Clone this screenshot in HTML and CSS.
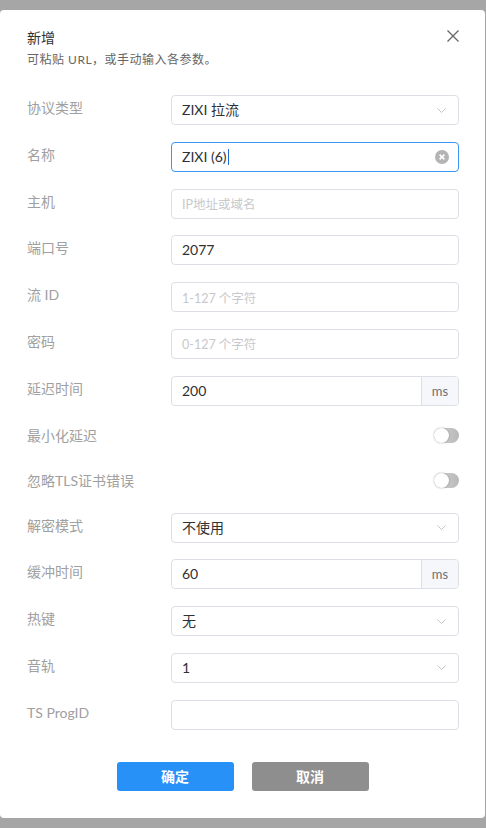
FILE: index.html
```html
<!DOCTYPE html>
<html lang="zh-CN">
<head>
<meta charset="utf-8">
<title>新增</title>
<link rel="stylesheet" href="styles.css">
</head>
<body>
<div class="dialog">
  <div class="header">
    <div class="title">新增</div>
    <div class="subtitle">可粘贴 URL，或手动输入各参数。</div>
    <button class="close" aria-label="关闭">
      <svg width="12" height="12" viewBox="0 0 12 12"><path d="M0.5 0.5 L11.5 11.5 M11.5 0.5 L0.5 11.5" stroke="#666" stroke-width="1.3" fill="none"/></svg>
    </button>
  </div>
  <div class="form">
    <div class="row">
      <div class="label">协议类型</div>
      <div class="control select"><span class="val">ZIXI 拉流</span><span class="chev"><svg width="9" height="5" viewBox="0 0 9 5"><path d="M0.5 0.5 L4.5 4.5 L8.5 0.5" stroke="#c0c4cc" stroke-width="1" fill="none"/></svg></span></div>
    </div>
    <div class="row">
      <div class="label">名称</div>
      <div class="control focused"><span class="val">ZIXI (6)</span><span class="caret"></span><span class="clear"><svg width="14" height="14" viewBox="0 0 14 14"><circle cx="7" cy="7" r="7" fill="#b4b4b4"/><path d="M4.6 4.6 L9.4 9.4 M9.4 4.6 L4.6 9.4" stroke="#fff" stroke-width="1.6"/></svg></span></div>
    </div>
    <div class="row">
      <div class="label">主机</div>
      <div class="control"><span class="ph">IP地址或域名</span></div>
    </div>
    <div class="row">
      <div class="label">端口号</div>
      <div class="control"><span class="val">2077</span></div>
    </div>
    <div class="row">
      <div class="label">流 ID</div>
      <div class="control"><span class="ph">1-127 个字符</span></div>
    </div>
    <div class="row">
      <div class="label">密码</div>
      <div class="control"><span class="ph">0-127 个字符</span></div>
    </div>
    <div class="row">
      <div class="label">延迟时间</div>
      <div class="control addon-wrap"><span class="val">200</span><span class="addon">ms</span></div>
    </div>
    <div class="row toggle-row">
      <div class="label">最小化延迟</div>
      <div class="switch-cell"><span class="switch"><span class="knob"></span></span></div>
    </div>
    <div class="row toggle-row">
      <div class="label">忽略TLS证书错误</div>
      <div class="switch-cell"><span class="switch"><span class="knob"></span></span></div>
    </div>
    <div class="row">
      <div class="label">解密模式</div>
      <div class="control select"><span class="val">不使用</span><span class="chev"><svg width="9" height="5" viewBox="0 0 9 5"><path d="M0.5 0.5 L4.5 4.5 L8.5 0.5" stroke="#c0c4cc" stroke-width="1" fill="none"/></svg></span></div>
    </div>
    <div class="row">
      <div class="label">缓冲时间</div>
      <div class="control addon-wrap"><span class="val">60</span><span class="addon">ms</span></div>
    </div>
    <div class="row">
      <div class="label">热键</div>
      <div class="control select"><span class="val">无</span><span class="chev"><svg width="9" height="5" viewBox="0 0 9 5"><path d="M0.5 0.5 L4.5 4.5 L8.5 0.5" stroke="#c0c4cc" stroke-width="1" fill="none"/></svg></span></div>
    </div>
    <div class="row">
      <div class="label">音轨</div>
      <div class="control select"><span class="val">1</span><span class="chev"><svg width="9" height="5" viewBox="0 0 9 5"><path d="M0.5 0.5 L4.5 4.5 L8.5 0.5" stroke="#c0c4cc" stroke-width="1" fill="none"/></svg></span></div>
    </div>
    <div class="row last">
      <div class="label">TS ProgID</div>
      <div class="control"></div>
    </div>
  </div>
  <div class="footer">
    <button class="btn primary">确定</button>
    <button class="btn cancel">取消</button>
  </div>
</div>
</body>
</html>
```
FILE: styles.css
```css
* { box-sizing: border-box; }
html, body { margin: 0; padding: 0; }
body {
  background: #a6a6a6;
  font-family: Lato, "Noto Sans CJK SC", sans-serif;
  width: 486px;
  height: 828px;
  padding-top: 10px;
  overflow: hidden;
}
.dialog {
  width: 485px;
  height: 808px;
  background: #fff;
  border-radius: 4px;
  padding: 18px 26px 0 27px;
}
.header {
  position: relative;
  height: 67px;
}
.title {
  font-size: 14px;
  line-height: 20px;
  color: #303133;
}
.subtitle {
  margin-top: 2px;
  font-size: 12px;
  line-height: 20px;
  color: #666;
  letter-spacing: 0.5px;
}
.close {
  position: absolute;
  right: -4px;
  top: 1px;
  width: 20px;
  height: 14px;
  padding: 0;
  border: 0;
  background: none;
  display: flex;
  align-items: center;
  justify-content: center;
}
.form {
  display: flex;
  flex-direction: column;
}
.row {
  display: grid;
  grid-template-columns: 144px 1fr;
  height: 30px;
  margin-bottom: 16.8px;
}
.row.toggle-row {
  height: 28px;
  margin-bottom: 17px;
}
.row.last { margin-bottom: 32px; }
.label {
  font-size: 14px;
  line-height: 26px;
  color: #a0a0a0;
  white-space: nowrap;
}
.control {
  position: relative;
  height: 30px;
  border: 1px solid #dcdfe6;
  border-radius: 4px;
  display: flex;
  align-items: center;
  padding-left: 10px;
  font-size: 14px;
  color: #303133;
  overflow: hidden;
}
.control.focused { border-color: #3a95f5; }
.val { line-height: 28px; }
.ph {
  font-size: 12.5px;
  color: #c8c9cc;
}
.caret {
  width: 1px;
  height: 16px;
  background: #1f6fd1;
  margin-left: 1px;
}
.clear {
  margin-left: auto;
  margin-right: 9px;
  display: flex;
}
.chev {
  margin-left: auto;
  margin-right: 12px;
  display: flex;
}
.addon-wrap { padding-right: 0; }
.addon {
  margin-left: auto;
  width: 37px;
  height: 100%;
  background: #f5f7fa;
  border-left: 1px solid #dcdfe6;
  color: #707070;
  font-size: 13px;
  display: flex;
  align-items: center;
  justify-content: center;
}
.switch-cell {
  display: flex;
  justify-content: flex-end;
  padding-top: 5px;
}
.switch {
  position: relative;
  width: 25px;
  height: 15px;
  border-radius: 8px;
  background: linear-gradient(to right, #d6d6d6, #b8b8b8);
}
.knob {
  position: absolute;
  left: 0;
  top: 0;
  width: 15px;
  height: 15px;
  border-radius: 50%;
  background: #fff;
  box-shadow: 0 0 2px rgba(0,0,0,0.35);
}
.footer {
  display: flex;
  justify-content: center;
  gap: 18px;
  padding-right: 1px;
}
.btn {
  width: 117px;
  height: 29px;
  border: 0;
  border-radius: 3px;
  color: #fff;
  font-family: Lato, "Noto Sans CJK SC", sans-serif;
  font-size: 14px;
  font-weight: bold;
  padding: 0;
}
.btn.primary { background: #2891f8; }
.btn.cancel { background: #8e8e8e; }
```
